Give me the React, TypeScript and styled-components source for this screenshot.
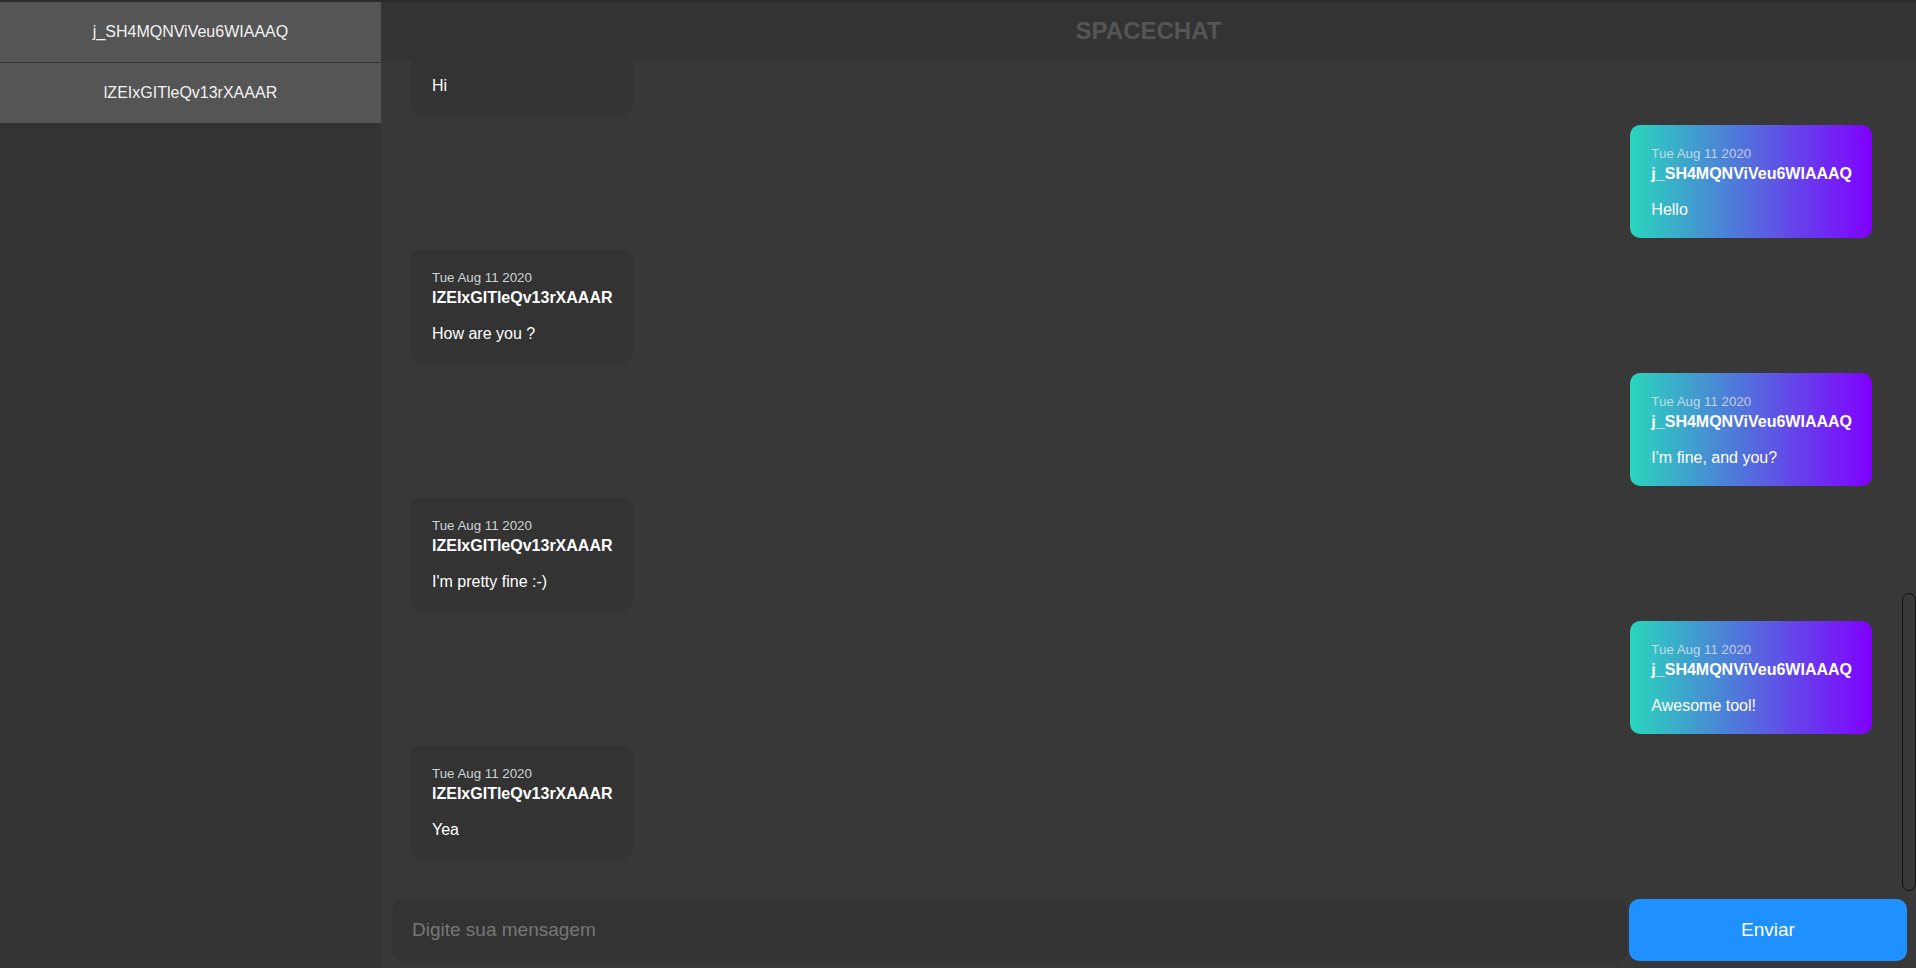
import React, { useLayoutEffect, useRef, useState } from "react";
import styled, { createGlobalStyle } from "styled-components";

const GlobalStyle = createGlobalStyle`
  html, body { margin: 0; padding: 0; height: 100%; }
  body {
    background: #2b2b2b;
    font-family: "Liberation Sans", Arial, sans-serif;
    overflow: hidden;
  }
  * { box-sizing: border-box; }
`;

const Shell = styled.div`
  display: flex;
  height: 100vh;
  padding-top: 2px;
  background: #2b2b2b;
`;

const Sidebar = styled.aside`
  width: 381px;
  flex-shrink: 0;
  background: #333333;
  display: flex;
  flex-direction: column;
  gap: 1px;
`;

const UserItem = styled.div`
  height: 60px;
  background: #555555;
  color: #f2f2f2;
  font-size: 16px;
  display: flex;
  align-items: center;
  justify-content: center;
`;

const Main = styled.main`
  flex: 1;
  min-width: 0;
  display: flex;
  flex-direction: column;
  background: #383838;
`;

const Header = styled.header`
  height: 59px;
  flex-shrink: 0;
  background: #333333;
  display: flex;
  align-items: center;
  justify-content: center;
`;

const Title = styled.h1`
  margin: 0 0 2px;
  font-size: 24px;
  font-weight: 700;
  color: #555555;
`;

const MessageArea = styled.div`
  position: relative;
  flex: 1;
  min-height: 0;
  display: flex;
`;

const MessageList = styled.div`
  flex: 1;
  overflow-y: auto;
  display: flex;
  flex-direction: column;
  gap: 11px;
  padding: 56px 44px 33px 30px;
  scrollbar-width: none;

  &::-webkit-scrollbar {
    display: none;
  }
`;

const ScrollThumb = styled.div`
  position: absolute;
  right: 0;
  width: 14px;
  background: #383838;
  border: 1px solid #111111;
  border-radius: 7px;
  pointer-events: none;
`;

const Bubble = styled.div<{ $mine: boolean }>`
  flex-shrink: 0;
  align-self: ${(p) => (p.$mine ? "flex-end" : "flex-start")};
  padding: 21px 20px 19px 21px;
  border-radius: 10px;
  color: #ffffff;
  background: ${(p) =>
    p.$mine ? "linear-gradient(to right, #2ad6bd, #8000ff)" : "#333333"};
`;

const DateLine = styled.div<{ $mine: boolean }>`
  font-size: 13.3px;
  line-height: 15px;
  color: ${(p) => (p.$mine ? "rgba(235, 235, 245, 0.75)" : "#cfd3d8")};
`;

const Author = styled.div`
  margin-top: 4px;
  font-size: 16px;
  line-height: 18px;
  font-weight: 700;
`;

const Text = styled.p`
  margin: 18px 0 0;
  font-size: 16px;
  line-height: 18px;
`;

const Composer = styled.form`
  flex-shrink: 0;
  display: flex;
  gap: 2px;
  padding: 8px 9px 7px 11px;
`;

const Input = styled.input`
  flex: 1;
  min-width: 0;
  height: 62px;
  border: none;
  outline: none;
  border-radius: 10px;
  background: #333333;
  padding: 0 20px;
  font-family: "Liberation Sans", Arial, sans-serif;
  font-size: 19px;
  color: #eeeeee;
  caret-color: #ffffff;

  &::placeholder {
    color: #777777;
  }
`;

const SendButton = styled.button`
  width: 278px;
  height: 62px;
  border: none;
  border-radius: 10px;
  background: #1e90ff;
  color: #ffffff;
  font-family: "Liberation Sans", Arial, sans-serif;
  font-size: 19px;
  cursor: pointer;
`;

const ME = "j_SH4MQNViVeu6WIAAAQ";
const OTHER = "lZEIxGITleQv13rXAAAR";
const DATE = "Tue Aug 11 2020";

type Message = { author: string; text: string };

const earlier: Message[] = [
  { author: ME, text: "Hello" },
  { author: OTHER, text: "Hi" },
  { author: ME, text: "Testing" },
  { author: OTHER, text: "It works" },
  { author: ME, text: "Nice" },
  { author: OTHER, text: "Hi" },
  { author: ME, text: "Hello" },
  { author: OTHER, text: "How are you ?" },
  { author: ME, text: "I'm fine" },
  { author: OTHER, text: "Ok" },
  { author: ME, text: "Hello" },
];

const recent: Message[] = [
  { author: OTHER, text: "Hi" },
  { author: ME, text: "Hello" },
  { author: OTHER, text: "How are you ?" },
  { author: ME, text: "I'm fine, and you?" },
  { author: OTHER, text: "I'm pretty fine :-)" },
  { author: ME, text: "Awesome tool!" },
  { author: OTHER, text: "Yea" },
];

const messages = [...earlier, ...recent];

export default function App() {
  const listRef = useRef<HTMLDivElement>(null);
  const [thumb, setThumb] = useState({ top: 0, height: 0 });

  const measure = () => {
    const el = listRef.current;
    if (!el) return;
    const { scrollHeight, clientHeight, scrollTop } = el;
    const height = (clientHeight * clientHeight) / scrollHeight;
    const top = (scrollTop / scrollHeight) * clientHeight;
    setThumb({ top, height });
  };

  useLayoutEffect(() => {
    const el = listRef.current;
    if (el) el.scrollTop = el.scrollHeight;
    measure();
  }, []);

  return (
    <>
      <GlobalStyle />
      <Shell>
        <Sidebar>
          <UserItem>{ME}</UserItem>
          <UserItem>{OTHER}</UserItem>
        </Sidebar>
        <Main>
          <Header>
            <Title>SPACECHAT</Title>
          </Header>
          <MessageArea>
            <MessageList ref={listRef} onScroll={measure}>
              {messages.map((m, i) => {
                const mine = m.author === ME;
                return (
                  <Bubble key={i} $mine={mine}>
                    <DateLine $mine={mine}>{DATE}</DateLine>
                    <Author>{m.author}</Author>
                    <Text>{m.text}</Text>
                  </Bubble>
                );
              })}
            </MessageList>
            {thumb.height > 0 && (
              <ScrollThumb style={{ top: thumb.top, height: thumb.height }} />
            )}
          </MessageArea>
          <Composer onSubmit={(e) => e.preventDefault()}>
            <Input placeholder="Digite sua mensagem" autoFocus />
            <SendButton type="submit">Enviar</SendButton>
          </Composer>
        </Main>
      </Shell>
    </>
  );
}
